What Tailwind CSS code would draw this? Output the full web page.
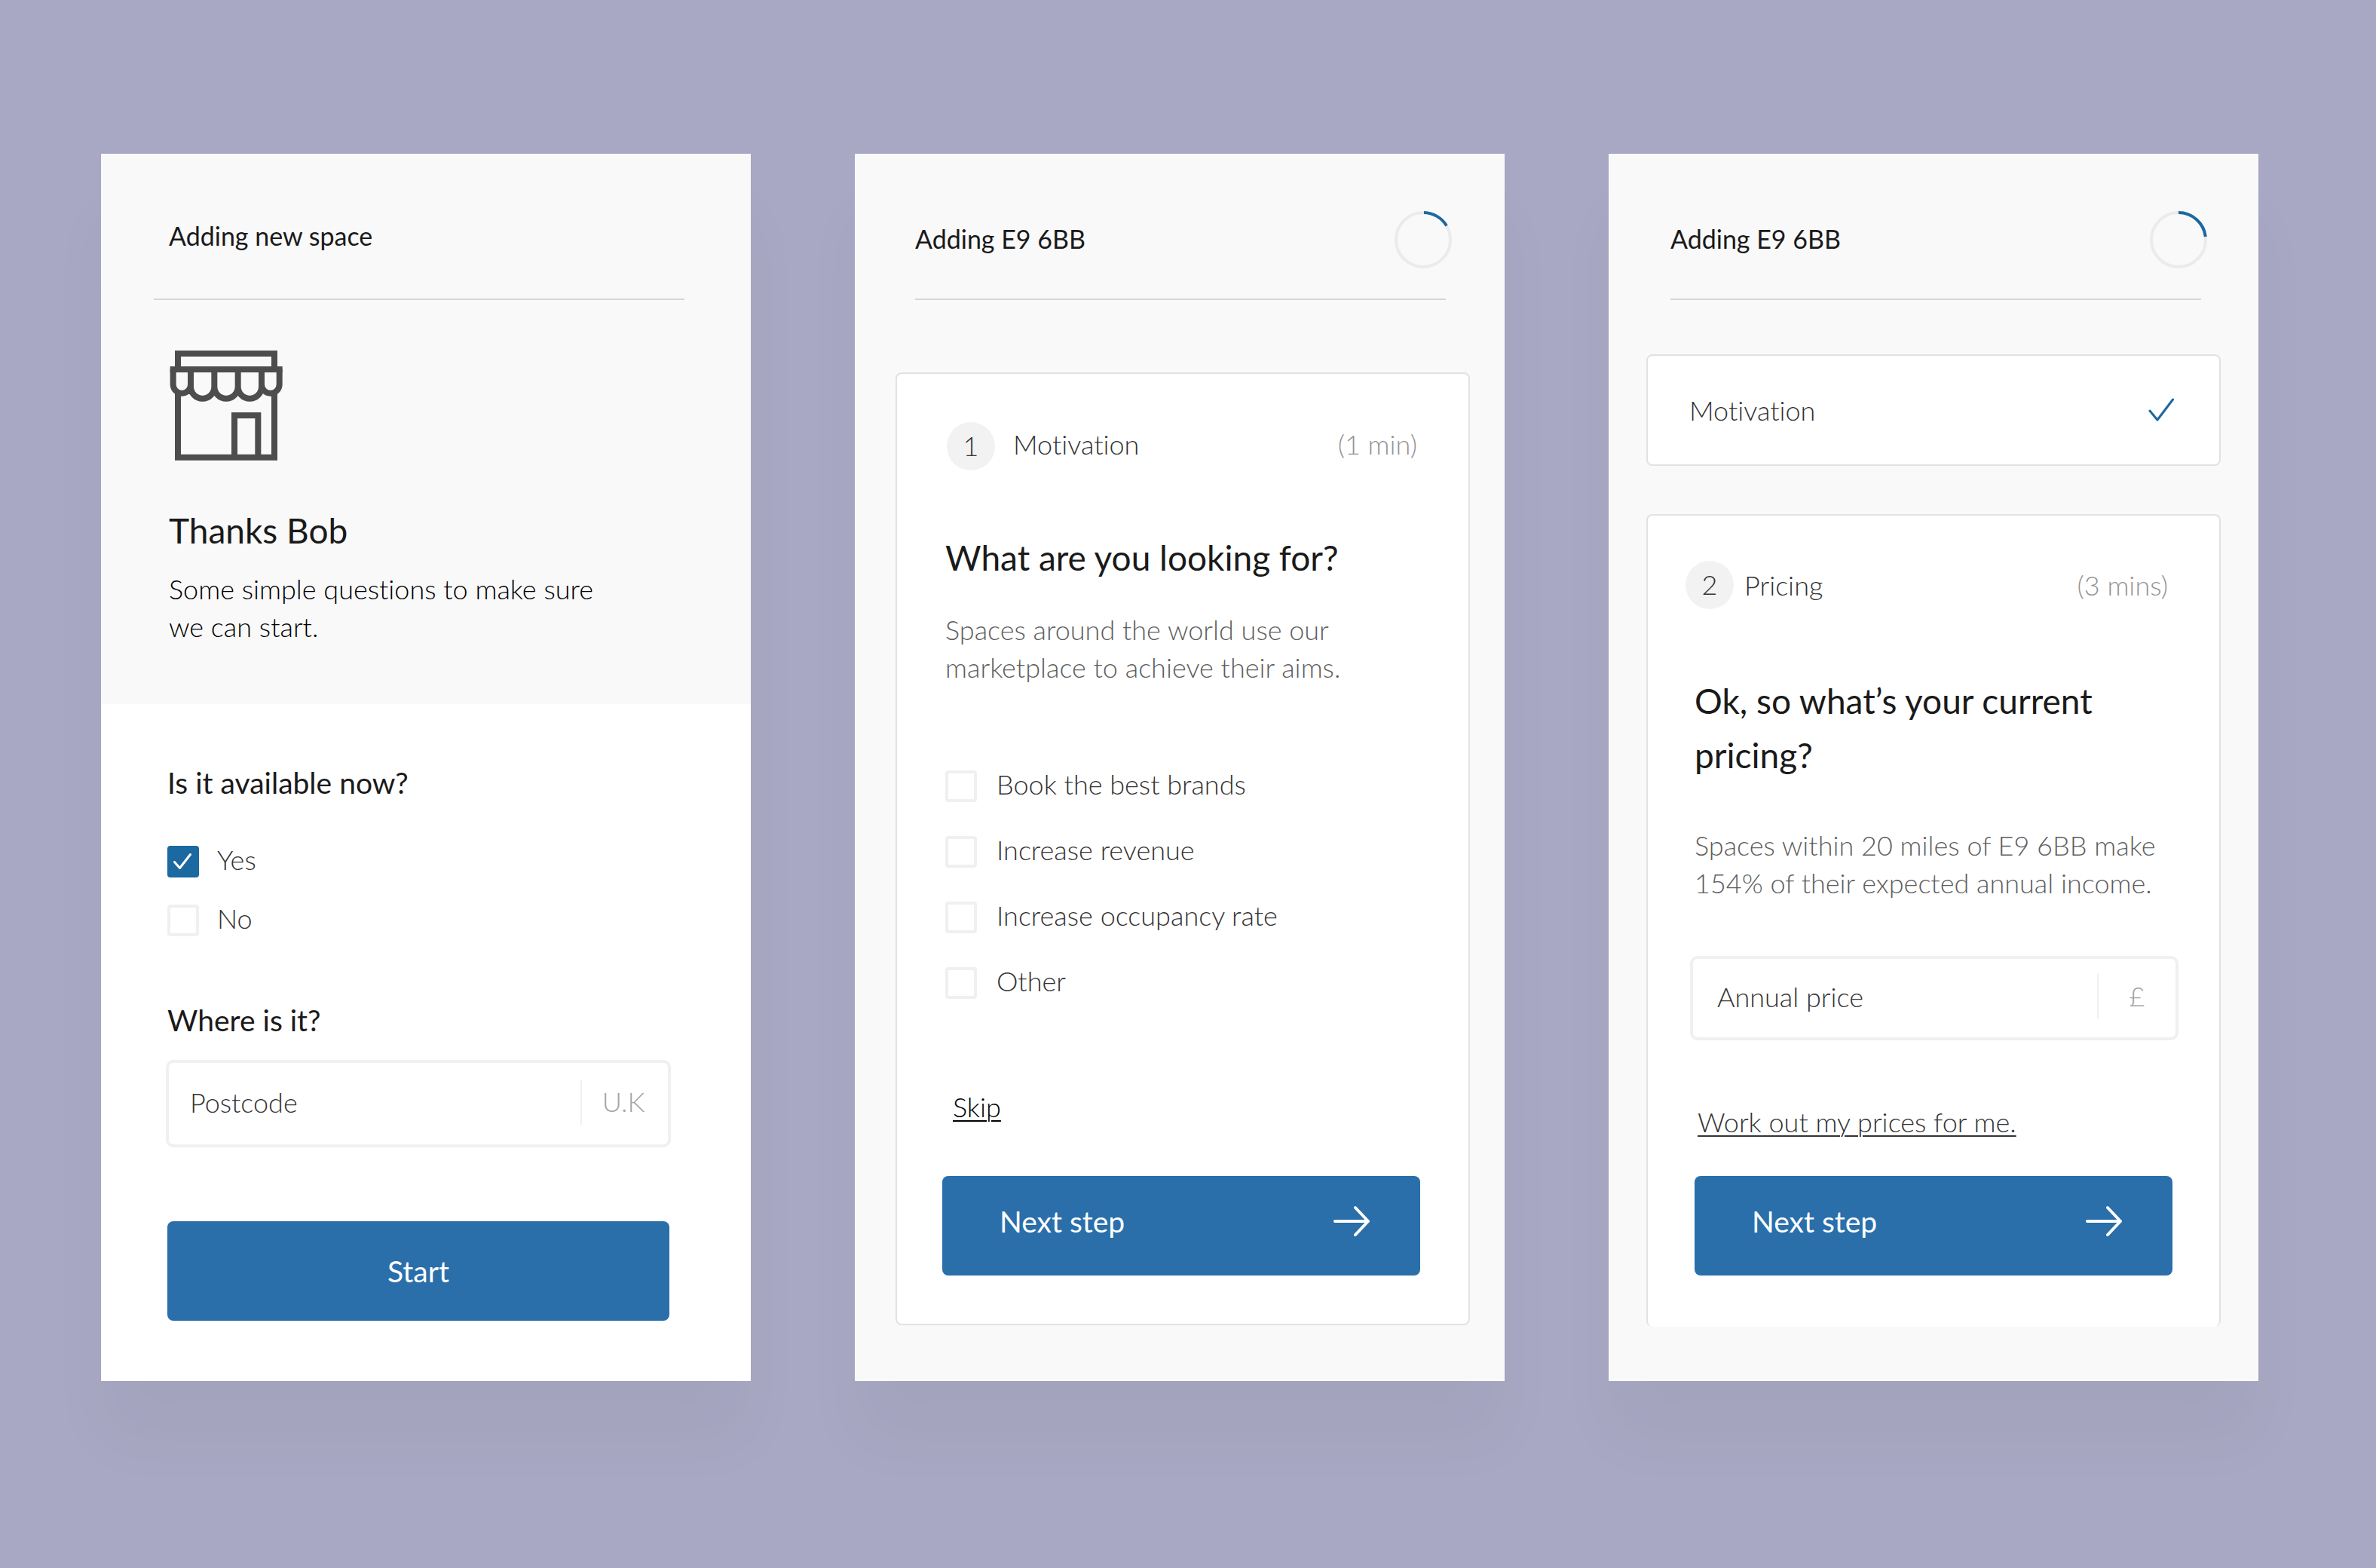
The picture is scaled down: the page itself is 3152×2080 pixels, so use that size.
<!DOCTYPE html>
<html lang="en">
<head>
<meta charset="utf-8">
<meta name="viewport" content="width=device-width, initial-scale=1">
<title>Adding new space</title>
<script src="https://cdn.jsdelivr.net/npm/@tailwindcss/browser@4"></script>
</head>
<body class="min-h-screen bg-[#a8a8c4] font-[Lato,'Open_Sans',sans-serif] text-[#1a1a1a] [font-variant-ligatures:none]">
<main class="grid grid-cols-3 items-start gap-[138px] pt-[204px] pr-[156px] pb-[248px] pl-[134px]">

  <!-- Intro -->
  <section class="bg-white shadow-[0_80px_80px_rgba(0,0,0,0.03)]">
    <div class="bg-[#f9f9f9] pt-[85px] pb-[78px]">
      <h1 class="pl-[90px] text-[34px] leading-[48px]">Adding new space</h1>
      <hr class="mt-[59px] mr-[88px] ml-[70px] border-t-2 border-[#d6d6d6]">
      <div class="px-[90px]">
        <svg class="mt-[66px] h-[148px] w-[152px]" viewBox="72 72 456 444" fill="none" stroke="#4d4d4d" stroke-width="24" aria-hidden="true">
          <path d="M108 140V87H492V140M77 150H524M108 240V500H492V240M333 500V333H427V500"/>
          <path d="M89 150V210A35 35 0 0 0 159 210V150M159 150V219A47 47 0 0 0 253 219V150M253 219A47 47 0 0 0 347 219V150M347 219A47 47 0 0 0 441 219V150M441 210A35.500 35 0 0 0 512 210V150"/>
        </svg>
        <h2 class="mt-16 text-[46px] leading-[56px]">Thanks Bob</h2>
        <p class="mt-6 text-[36px] leading-[50px] font-light text-black">Some simple questions to make sure<br>we can start.</p>
      </div>
    </div>
    <form class="flex flex-col pt-20 pr-[108px] pb-20 pl-[88px]">
      <h3 class="text-[39px] leading-[48px]">Is it available now?</h3>
      <div class="mt-[60px] flex flex-col gap-9 text-[36px] leading-[36px] font-light text-[#333]">
        <label class="flex h-[42px] items-start gap-6">
          <span class="grid">
            <input type="checkbox" checked class="peer col-start-1 row-start-1 size-[42px] appearance-none rounded-[4px] border-4 border-[#f0f0f0] checked:border-[#1c68a0] checked:bg-[#1c68a0]">
            <svg class="pointer-events-none col-start-1 row-start-1 hidden size-[42px] peer-checked:block" viewBox="0 0 42 42" fill="none" stroke="#fff" stroke-width="3" stroke-linecap="round" stroke-linejoin="round" aria-hidden="true"><path d="M9.500 21.500L16.500 29.500L30.500 11.500"/></svg>
          </span>
          Yes
        </label>
        <label class="flex h-[42px] items-start gap-6">
          <span class="grid">
            <input type="checkbox" class="peer col-start-1 row-start-1 size-[42px] appearance-none rounded-[4px] border-4 border-[#f0f0f0] checked:border-[#1c68a0] checked:bg-[#1c68a0]">
          </span>
          No
        </label>
      </div>
      <label for="postcode" class="mt-[87px] text-[39px] leading-[48px]">Where is it?</label>
      <div class="-mx-0.5 mt-[29px] flex h-[116px] items-center rounded-[10px] border-4 border-[#f0f0f0] pb-1 text-[36px] font-light">
        <input id="postcode" type="text" placeholder="Postcode" class="h-[60px] min-w-0 flex-1 pl-7 outline-none placeholder:text-[#333]">
        <span class="h-[60px] w-[116px] border-l-2 border-[#f0f0f0] pr-1 text-center leading-[58px] text-[#a3a3a3]">U.K</span>
      </div>
      <button type="submit" class="mt-[98px] h-[132px] rounded-lg bg-[#2a6faa] text-[39px] text-white">Start</button>
    </form>
  </section>

  <!-- Step 1 -->
  <section class="bg-[#f9f9f9] pt-[76px] pb-[74px] shadow-[0_80px_80px_rgba(0,0,0,0.03)]">
    <header class="flex items-center justify-between pr-[70px] pl-20">
      <h1 class="pb-0.5 text-[34px] leading-[48px]">Adding E9 6BB</h1>
      <svg class="size-[76px]" viewBox="0 0 76 76" fill="none" stroke-width="4" role="img" aria-label="Progress"><circle cx="38" cy="38" r="36" stroke="#ebebeb"/><path d="M39 2A36 36 0 0 1 69 19.500" stroke="#1c68a0"/></svg>
    </header>
    <hr class="mt-10 mr-[78px] ml-20 border-t-2 border-[#d6d6d6]">
    <form class="mt-24 mr-[46px] ml-[54px] flex flex-col rounded-lg border-2 border-[#e2e2e2] bg-white p-16">
      <div class="flex items-center pr-1 pl-0.5 text-[36px] leading-[48px] font-light text-[#333]">
        <span class="grid size-16 place-items-center rounded-full bg-[#f2f2f2] pb-0.5">1</span>
        <span class="ml-6 flex-1 pb-1.5">Motivation</span>
        <span class="pb-1.5 text-[#949494]">(1 min)</span>
      </div>
      <h2 class="mt-20 text-[46px] leading-[72px]">What are you looking for?</h2>
      <p class="mt-[34px] text-[36px] leading-[50px] font-light text-[#5e5e5e]">Spaces around the world use our<br>marketplace to achieve their aims.</p>
      <div class="mt-28 flex flex-col gap-[45px] text-[36px] leading-[36px] font-light text-[#333]">
        <label class="flex h-[42px] items-start gap-[26px]"><input type="checkbox" class="size-[42px] appearance-none rounded-[4px] border-4 border-[#f0f0f0] checked:bg-[#1c68a0]">Book the best brands</label>
        <label class="flex h-[42px] items-start gap-[26px]"><input type="checkbox" class="size-[42px] appearance-none rounded-[4px] border-4 border-[#f0f0f0] checked:bg-[#1c68a0]">Increase revenue</label>
        <label class="flex h-[42px] items-start gap-[26px]"><input type="checkbox" class="size-[42px] appearance-none rounded-[4px] border-4 border-[#f0f0f0] checked:bg-[#1c68a0]">Increase occupancy rate</label>
        <label class="flex h-[42px] items-start gap-[26px]"><input type="checkbox" class="size-[42px] appearance-none rounded-[4px] border-4 border-[#f0f0f0] checked:bg-[#1c68a0]">Other</label>
      </div>
      <a href="#" class="mt-[119px] ml-2.5 self-start text-[36px] leading-[48px] font-light text-black underline decoration-2 underline-offset-4">Skip</a>
      <button type="submit" class="mt-[68px] -ml-1 flex h-[132px] items-center justify-between rounded-lg bg-[#2a6faa] pr-[65px] pb-3 pl-[76px] text-[39px] text-white">
        Next step
        <svg class="h-11 w-[52px]" viewBox="0 0 52 44" fill="none" stroke="currentColor" stroke-width="4" stroke-linecap="round" stroke-linejoin="round" aria-hidden="true"><path d="M4 22H48M31 4L48 22L31 40"/></svg>
      </button>
    </form>
  </section>

  <!-- Step 2 -->
  <section class="bg-[#f9f9f9] pt-[76px] pb-[72px] shadow-[0_80px_80px_rgba(0,0,0,0.03)]">
    <header class="flex items-center justify-between pr-[68px] pl-[82px]">
      <h1 class="pb-0.5 text-[34px] leading-[48px]">Adding E9 6BB</h1>
      <svg class="size-[76px]" viewBox="0 0 76 76" fill="none" stroke-width="4" role="img" aria-label="Progress"><circle cx="38" cy="38" r="36" stroke="#ebebeb"/><path d="M38 2A36 36 0 0 1 73.800 34" stroke="#1c68a0"/></svg>
    </header>
    <hr class="mt-10 mr-[76px] ml-[82px] border-t-2 border-[#d6d6d6]">
    <div class="mx-[50px] mt-[72px] flex h-[148px] items-center justify-between rounded-lg border-2 border-[#e2e2e2] bg-white pr-[58px] pl-[55px] text-[36px] leading-[48px] font-light text-[#333]">
      Motivation
      <svg class="h-8 w-9" viewBox="0 0 36 32" fill="none" stroke="#1c68a0" stroke-width="3" stroke-linecap="round" stroke-linejoin="round" aria-hidden="true"><path d="M2 17L12 29L32.500 2"/></svg>
    </div>
    <form class="mx-[50px] mt-16 flex flex-col rounded-lg border-2 border-b-0 border-[#e2e2e2] bg-white px-[62px] pt-[60px] pb-[68px]">
      <div class="-ml-3 flex items-center pr-1.5 text-[36px] leading-[48px] font-light text-[#333]">
        <span class="grid size-16 place-items-center rounded-full bg-[#f2f2f2] pb-0.5">2</span>
        <span class="ml-3.5 flex-1">Pricing</span>
        <span class="text-[#949494]">(3 mins)</span>
      </div>
      <h2 class="mt-[86px] text-[46px] leading-[72px]">Ok, so what’s your current<br>pricing?</h2>
      <p class="mt-[58px] text-[36px] leading-[50px] font-light text-[#5e5e5e]">Spaces within 20 miles of E9 6BB make<br>154% of their expected annual income.</p>
      <div class="mt-[72px] -mr-2 -ml-1.5 flex h-28 items-center rounded-[10px] border-4 border-[#f0f0f0] pb-1 text-[36px] font-light">
        <input type="text" aria-label="Annual price" placeholder="Annual price" class="h-[60px] min-w-0 flex-1 pl-8 outline-none placeholder:text-[#333]">
        <span class="h-[60px] w-[104px] border-l-2 border-[#f0f0f0] text-center leading-[58px] text-[#a3a3a3]">£</span>
      </div>
      <a href="#" class="mt-[84px] ml-1 self-start text-[36px] leading-[48px] font-light text-[#333] underline decoration-2 underline-offset-4">Work out my prices for me.</a>
      <button type="submit" class="mt-12 flex h-[132px] items-center justify-between rounded-lg bg-[#2a6faa] pr-[65px] pb-3 pl-[76px] text-[39px] text-white">
        Next step
        <svg class="h-11 w-[52px]" viewBox="0 0 52 44" fill="none" stroke="currentColor" stroke-width="4" stroke-linecap="round" stroke-linejoin="round" aria-hidden="true"><path d="M4 22H48M31 4L48 22L31 40"/></svg>
      </button>
    </form>
  </section>
</main>
</body>
</html>
